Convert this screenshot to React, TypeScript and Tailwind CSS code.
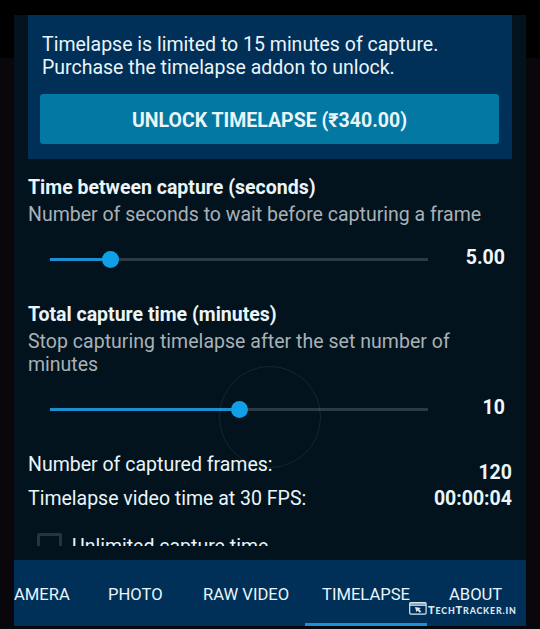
import React from "react";

function Slider({ fill, value, valueClass }: { fill: string; value: string; valueClass: string }) {
  return (
    <div className="flex h-[26px] items-center">
      <div className="relative ml-[22px] flex h-[3px] w-[378px] bg-[#2b3a44]">
        <div className={`h-full bg-[#1b8fd0] ${fill}`} />
        <div className="-ml-[8.5px] mt-[-7px] size-[17px] rounded-full bg-[#10a0e8]" />
      </div>
      <div className={`-mt-[4px] ml-auto font-bold text-[#f2f8fa] ${valueClass}`}>{value}</div>
    </div>
  );
}

export default function App() {
  return (
    <div className="h-[629px] w-[540px] overflow-hidden bg-[linear-gradient(#000_58px,#09060c_58px)] pt-[15px] font-['Roboto','Noto_Sans',sans-serif]">
      <div className="relative mx-auto flex h-[611px] w-[512px] flex-col bg-[#02131d] text-[19.5px] leading-[23px] text-[#eaf5fa]">
        <div className="h-[531px] overflow-hidden px-[14px] whitespace-nowrap">
          <section className="h-[144px] bg-[#002f57] px-3 pt-[18px]">
            <p className="pl-[2px]">Timelapse is limited to 15 minutes of capture.</p>
            <p className="pl-[2px]">Purchase the timelapse addon to unlock.</p>
            <button className="mt-[15px] flex h-[50px] w-[459px] items-center justify-center rounded-[3px] bg-[#0278a2] pt-[2px] font-bold">
              UNLOCK TIMELAPSE (₹340.00)
            </button>
          </section>

          <section className="h-[127px] pt-[17px]">
            <h2 className="font-bold">Time between capture (seconds)</h2>
            <p className="mt-1 mb-[20px] text-[#a9b1b6]">Number of seconds to wait before capturing a frame</p>
            <Slider fill="w-[60px]" value="5.00" valueClass="pr-[7px]" />
          </section>

          <section className="h-[151px] pt-[17px]">
            <h2 className="font-bold">Total capture time (minutes)</h2>
            <p className="mt-1 tracking-[0.03px] text-[#a9b1b6]">Stop capturing timelapse after the set number of</p>
            <p className="mb-[20px] text-[#a9b1b6]">minutes</p>
            <Slider fill="w-[189px]" value="10" valueClass="pr-[7px]" />
          </section>

          <section className="pt-4">
            <div className="flex justify-between">
              <span>Number of captured frames:</span>
              <span className="mt-2 font-bold">120</span>
            </div>
            <div className="mt-[3px] flex justify-between">
              <span>Timelapse video time at 30 FPS:</span>
              <span className="font-bold">00:00:04</span>
            </div>
            <div className="mt-[21px] ml-[9px] flex items-start">
              <div className="mt-[2px] size-[25px] rounded-[2px] border-[3px] border-[#26343c]" />
              <span className="ml-[10px] mt-[4px]">Unlimited capture time</span>
            </div>
          </section>
        </div>

        <nav className="mt-[14px] flex h-[66px] bg-[#003058] text-[16.6px] leading-[69px] whitespace-nowrap">
          <span className="w-[94px]">AMERA</span>
          <span className="w-[95px]">PHOTO</span>
          <span className="w-[102px]">RAW VIDEO</span>
          <span className="w-[122px] border-b-[3px] border-[#1b8fd8] pl-[17px]">TIMELAPSE</span>
          <span className="ml-[22px]">ABOUT</span>
        </nav>

        <div className="pointer-events-none absolute left-[205px] top-[351px] size-[102px] rounded-full border border-white/8" />

        <div className="absolute left-[395px] top-[587px] flex h-[13px] items-center text-[#dce7ef]">
          <svg width="18" height="13" viewBox="0 0 18 13" fill="none" stroke="currentColor">
            <rect x="0.7" y="0.7" width="16.4" height="11.4" rx="1" strokeWidth="1.2" />
            <path d="M1 1.8h16" strokeWidth="2.4" strokeOpacity="0.6" />
            <path d="M1 3.4h16" strokeWidth="0.9" />
            <path d="M6 5l6 1-1.8 1.2 2 2.2-1.5 1.3-2-2.2-1.3 1.5z" fill="currentColor" stroke="none" />
          </svg>
          <span className="ml-px mt-[3px] font-['Lato',sans-serif] text-[11px] font-black leading-none tracking-[0.85px]">
            T<small className="text-[8.8px]">ECH</small>T<small className="text-[8.8px]">RACKER.IN</small>
          </span>
        </div>
      </div>
    </div>
  );
}
